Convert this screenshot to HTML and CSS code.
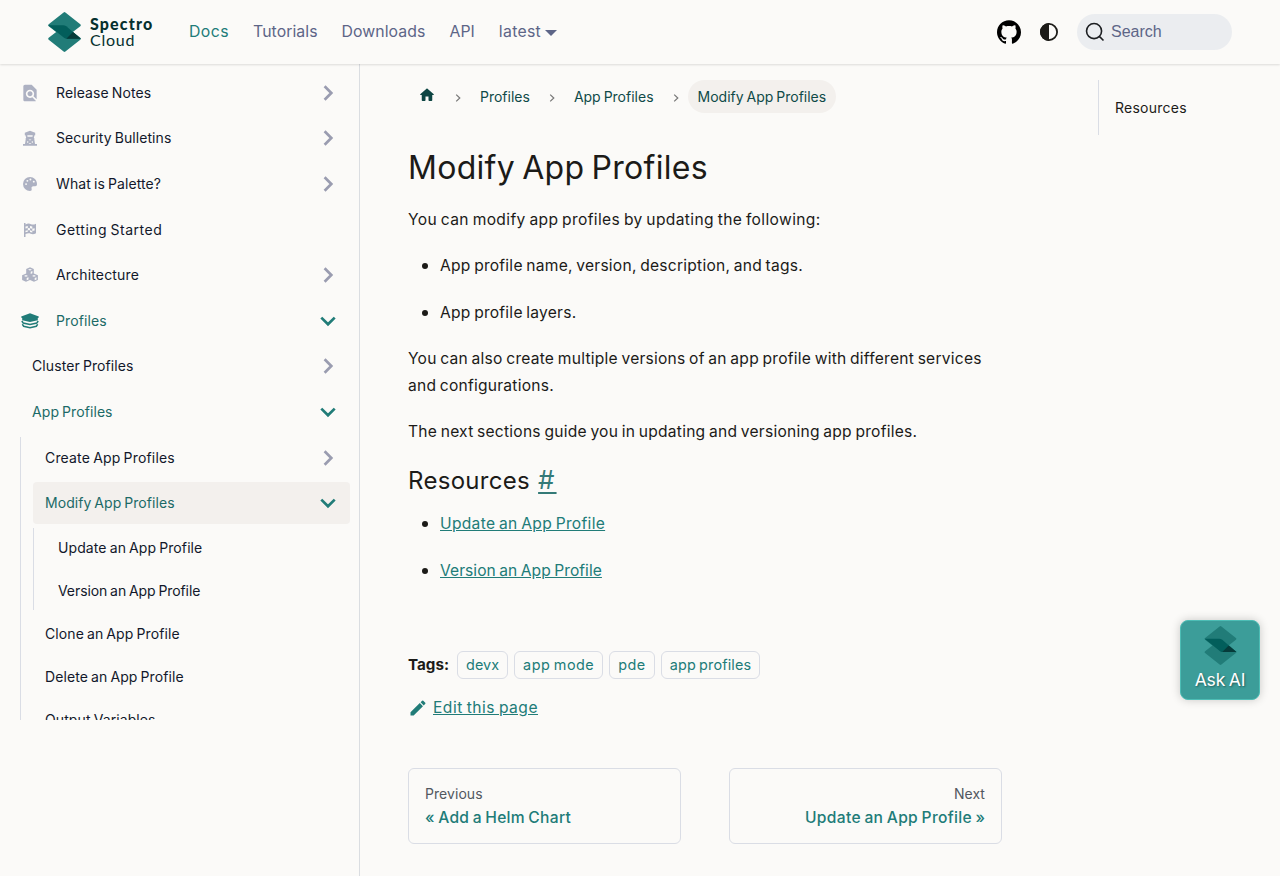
FILE: index.html
```
<!DOCTYPE html>
<html lang="en">
<head>
<meta charset="utf-8">
<title>Modify App Profiles | Palette</title>
<link rel="stylesheet" href="styles.css">
</head>
<body>
<svg class="defs" width="0" height="0">
  <symbol id="mark" viewBox="0 0 33 40">
    <path fill="#217c78" d="M15.6.4Q16.5-.2 17.4.4L32.3 12.2Q33.3 13.2 32.3 14.2L24.8 20 32.3 25.8Q33.3 26.8 32.3 27.8L17.4 39.6Q16.5 40.2 15.6 39.6L.7 27.8Q-.3 26.8.7 25.8L8.2 20 .7 14.2Q-.3 13.2.7 12.2Z"/>
    <path fill="#025e5b" d="M.2 13.2H15q2 0 3.3 1l14.500 12.500H18.600Q17.400 26.700 16 25.800Z"/>
    <path fill="#063b3a" d="M25 20l7.800 6.700H18.300Z"/>
  </symbol>
  <symbol id="chev" viewBox="0 0 24 24"><path d="M8.600 5.300 15.300 12 8.600 18.700" fill="none" stroke="currentColor" stroke-width="2.700"/></symbol>
  <symbol id="crumb" viewBox="0 0 8 8"><path d="M2.200.6 5.800 4 2.200 7.400" fill="none" stroke="#777" stroke-width="1.200"/></symbol>
</svg>

<header class="navbar">
  <a class="brand"><svg class="brand-mark"><use href="#mark"/></svg><span class="brand-name"><b>Spectro</b><span>Cloud</span></span></a>
  <nav class="nav-links">
    <a class="active">Docs</a><a>Tutorials</a><a>Downloads</a><a>API</a><a class="version">latest<i class="caret"></i></a>
  </nav>
  <div class="nav-right">
    <svg class="github" viewBox="0 0 24 24"><path d="M12 .297c-6.63 0-12 5.373-12 12 0 5.303 3.438 9.8 8.205 11.385.6.113.82-.258.82-.577 0-.285-.01-1.04-.015-2.04-3.338.724-4.042-1.61-4.042-1.61C4.422 18.07 3.633 17.7 3.633 17.7c-1.087-.744.084-.729.084-.729 1.205.084 1.838 1.236 1.838 1.236 1.07 1.835 2.809 1.305 3.495.998.108-.776.417-1.305.76-1.605-2.665-.3-5.466-1.332-5.466-5.93 0-1.31.465-2.38 1.235-3.22-.135-.303-.54-1.523.105-3.176 0 0 1.005-.322 3.3 1.23.96-.267 1.98-.399 3-.405 1.02.006 2.04.138 3 .405 2.28-1.552 3.285-1.23 3.285-1.23.645 1.653.24 2.873.12 3.176.765.84 1.23 1.91 1.23 3.22 0 4.61-2.805 5.625-5.475 5.92.42.36.81 1.096.81 2.22 0 1.606-.015 2.896-.015 3.286 0 .315.21.69.825.57C20.565 22.092 24 17.592 24 12.297c0-6.627-5.373-12-12-12"/></svg>
    <svg class="theme" viewBox="0 0 18 18"><circle cx="9" cy="9" r="8.1" fill="none" stroke="#1c1b18" stroke-width="1.8"/><path d="M9 0a9 9 0 0 0 0 18Z" fill="#1c1b18"/></svg>
    <div class="search"><svg viewBox="0 0 20 20"><path d="M14.386 14.386l4.0877 4.0877-4.0877-4.0877c-2.9418 2.9419-7.7115 2.9419-10.6533 0-2.9419-2.9418-2.9419-7.7115 0-10.6533 2.9418-2.9419 7.7115-2.9419 10.6533 0 2.9419 2.9418 2.9419 7.7115 0 10.6533z" fill="none" stroke="#1c1e21" stroke-width="1.6" stroke-linecap="round"/></svg><span>Search</span></div>
  </div>
</header>

<div class="layout">
  <aside class="sidebar">
    <ul class="menu">
      <li class="row top"><svg class="ico" viewBox="0 0 24 24"><path d="M20 19.59V8l-6-6H6c-1.100 0-2 .9-2 2v16c0 1.100.9 2 2 2h12c.45 0 .85-.15 1.190-.4l-4.430-4.430c-.8.520-1.740.830-2.760.830-2.760 0-5-2.240-5-5s2.240-5 5-5 5 2.240 5 5c0 1.020-.31 1.960-.83 2.750L20 19.590zM9 13c0 1.660 1.340 3 3 3s3-1.340 3-3-1.340-3-3-3-3 1.340-3 3z"/></svg><span>Release Notes</span><svg class="chev"><use href="#chev"/></svg></li>
      <li class="row top"><svg class="ico" viewBox="0 0 20 20"><path fill-rule="evenodd" d="M10 2.700 15.200 4.800V7.200H14.500L13.800 10H14.300V11.200L15 16H17V17.800H3V16H5L5.700 11.200V10H6.200L5.500 7.200H4.800V4.800ZM7.300 7.200 7.500 8.700H12.500L12.700 7.200ZM8.500 11.500 10 12.500 11.500 11.500ZM7.300 13 7 15 8.800 14ZM12.700 13 11.200 14 13 15ZM10 14.900 8.500 16H11.500Z"/></svg><span class="tight">Security Bulletins</span><svg class="chev"><use href="#chev"/></svg></li>
      <li class="row top"><svg class="ico" viewBox="0 0 20 20"><path fill-rule="evenodd" transform="translate(3 3) scale(.875)" d="M8 0a8 8 0 0 0 0 16c1.500 0 2.200-1 1.900-2.300-.6-2 .2-3.200 2-3.200H14c1.300 0 2-.8 2-2.500C16 3.600 12.400 0 8 0ZM3.500 7a1.100 1.100 0 1 1 0 2.200 1.100 1.100 0 0 1 0-2.200ZM5 3.300a1.100 1.100 0 1 1 0 2.200 1.100 1.100 0 0 1 0-2.200ZM8.500 1.700a1.100 1.100 0 1 1 0 2.200 1.100 1.100 0 0 1 0-2.200ZM12.300 4.200a1.100 1.100 0 1 1 0 2.200 1.100 1.100 0 0 1 0-2.200Z"/></svg><span>What is Palette?</span><svg class="chev"><use href="#chev"/></svg></li>
      <li class="row top"><svg class="ico" viewBox="0 0 20 20"><path fill-rule="evenodd" d="M4 3H5.500V4.400C8 3.200 9.500 3.500 11 4.200 12.500 4.900 14 4.600 16 3.700V13.300C14 14.300 12.300 14.400 10.600 13.700 9 13 7.500 13.200 5.500 14V17H4ZM5.500 6.500V8.600L7.800 8V5.900ZM10 6V8.200L12.300 8.700V6.600ZM7.800 8V10.200L10 10.300V8.200ZM12.300 8.700V10.900L14.600 10.400V8.200ZM5.500 10.800V12.200L7.800 11.700V10.200ZM10 10.300V12L12.300 12.500V10.900Z"/></svg><span class="loose">Getting Started</span></li>
      <li class="row top"><svg class="ico" viewBox="0 0 20 20"><path fill-rule="evenodd" d="M10 2.300 13.800 3.900V8.400L17.900 10.200V15L14 16.800 10 15 6 16.800 2.100 15V10.200L6.200 8.400V3.900ZM8 4.700 10 5.500 12 4.700 10 3.900ZM10.700 6.800V9L12.400 8.200V6ZM4 10.900 6 11.700 8 10.900 6 10.100ZM12 10.900 14 11.700 16 10.900 14 10.100ZM6.700 13V15.200L8.500 14.400V12.200ZM14.700 13V15.200L16.500 14.400V12.200Z"/></svg><span class="mid">Architecture</span><svg class="chev"><use href="#chev"/></svg></li>
      <li class="row top open"><svg class="ico" viewBox="0 0 20 20"><path d="M10 2.300 18.800 5.600V6.400L17.800 6.900V9.300L10 11 2.200 9.300V6.900L1.200 6.400V5.600Z"/><path d="M1.800 10 3.200 12 10 13.500 16.800 12 18.200 10M2.300 13.300 3.700 15.300 10 16.700 16.300 15.300 17.700 13.300" fill="none" stroke="currentColor" stroke-width="1.500"/></svg><span>Profiles</span><svg class="chev"><use href="#chev"/></svg></li>
      <li class="row"><span>Cluster Profiles</span><svg class="chev"><use href="#chev"/></svg></li>
      <li class="row open"><span class="tight">App Profiles</span><svg class="chev"><use href="#chev"/></svg></li>
      <li><ul class="nested">
        <li class="row"><span class="mid">Create App Profiles</span><svg class="chev"><use href="#chev"/></svg></li>
        <li class="row open current"><span>Modify App Profiles</span><svg class="chev"><use href="#chev"/></svg></li>
        <li><ul class="nested">
          <li class="row leaf"><span>Update an App Profile</span></li>
          <li class="row leaf"><span class="tighter">Version an App Profile</span></li>
        </ul></li>
        <li class="row leaf"><span>Clone an App Profile</span></li>
        <li class="row leaf"><span>Delete an App Profile</span></li>
        <li class="row leaf"><span>Output Variables</span></li>
      </ul></li>
    </ul>
  </aside>

  <main class="content">
    <nav class="crumbs">
      <svg class="home" viewBox="0 0 24 24"><path d="M10 19v-5h4v5c0 .55.45 1 1 1h3c.55 0 1-.45 1-1v-7h1.700c.46 0 .68-.57.33-.87L12.670 3.600c-.38-.34-.96-.34-1.340 0l-8.360 7.530c-.34.300-.13.870.330.870H5v7c0 .55.450 1 1 1h3c.55 0 1-.45 1-1z"/></svg>
      <svg class="sep"><use href="#crumb"/></svg><a>Profiles</a>
      <svg class="sep"><use href="#crumb"/></svg><a>App Profiles</a>
      <svg class="sep last"><use href="#crumb"/></svg><a class="pill">Modify App Profiles</a>
    </nav>
    <h1>Modify App Profiles</h1>
    <p class="intro">You can modify app profiles by updating the following:</p>
    <ul>
      <li>App profile name, version, description, and tags.</li>
      <li>App profile layers.</li>
    </ul>
    <p>You can also create multiple versions of an app profile with different services<br>and configurations.</p>
    <p>The next sections guide you in updating and versioning app profiles.</p>
    <h2>Resources <a>#</a></h2>
    <ul class="links">
      <li><a>Update an App Profile</a></li>
      <li><a class="tight-link">Version an App Profile</a></li>
    </ul>
    <div class="tags"><b>Tags:</b><a>devx</a><a class="wide-tag">app mode</a><a class="wide-tag">pde</a><a class="long-tag">app profiles</a></div>
    <div class="edit"><svg viewBox="0 0 40 40"><path d="m34.500 11.700-3 3.100-6.300-6.300 3.100-3q.5-.5 1.200-.5t1.100.5l3.900 3.900q.5.400.5 1.100t-.5 1.200zM5 28.700 23.600 10.100l6.300 6.300L11.300 35H5v-6.300z"/></svg><a>Edit this page</a></div>
    <nav class="pager">
      <a><small>Previous</small><span>« Add a Helm Chart</span></a>
      <a class="next"><small>Next</small><span>Update an App Profile »</span></a>
    </nav>
  </main>

  <aside class="toc"><a>Resources</a></aside>
</div>

<button class="ask"><svg><use href="#mark"/></svg><span>Ask AI</span></button>
</body>
</html>
```
FILE: styles.css
```
* { box-sizing: border-box; }
body {
  margin: 0;
  height: 876px;
  overflow: hidden;
  background: #fbfaf8;
  color: #1c1b18;
  font: 15.6px/26.4px Inter, "Open Sans", sans-serif;
  word-spacing: -1px;
  letter-spacing: .23px;
}
ul { margin: 0; padding: 0; }
.defs { position: absolute; }

.navbar {
  position: relative;
  z-index: 2;
  display: flex;
  align-items: center;
  height: 64px;
  padding: 0 48px;
  background: #fbfaf8;
  box-shadow: 0 1px 2px rgba(0, 0, 0, .12);
}
.brand { display: flex; align-items: center; gap: 9px; width: 141px; }
.brand-mark { width: 33px; height: 40px; }
.brand-name { display: flex; flex-direction: column; margin-top: -1px; color: #06302e; font: 16px/16px Lato, sans-serif; letter-spacing: .75px; }
.brand-name b { font-weight: 900; font-size: 16px; letter-spacing: 1.150px; }
.nav-links { display: flex; gap: 24px; padding-bottom: 1px; color: #5d6587; font-size: 15.800px; line-height: 23px; letter-spacing: .07px; }
.nav-links .active { color: #217c78; letter-spacing: .45px; }
.version { display: flex; align-items: center; letter-spacing: .3px; }
.caret { border: 6px solid transparent; border-top-color: currentColor; border-bottom: 0; margin: 3px 0 0 4px; }
.nav-right { display: flex; align-items: center; margin-left: auto; }
.github { width: 24px; height: 24px; margin-right: 19px; }
.theme { width: 18px; height: 18px; margin-right: 19px; }
.search { display: flex; align-items: center; gap: 6px; width: 155px; height: 36px; padding-left: 8px; border-radius: 18px; background: #ebedf0; color: #5d6587; font: 16px "Liberation Sans", Arial, sans-serif; letter-spacing: 0; }
.search svg { width: 20px; height: 20px; }

.layout { display: flex; height: 812px; }
.sidebar { width: 360px; flex: none; border-right: 1px solid #dadde1; }
.menu { height: 656px; padding: 8px 9px 0 20px; overflow: hidden; list-style: none; font-size: 14px; font-weight: 400; line-height: 18px; color: #12182b; letter-spacing: .1px; }
.menu ul { list-style: none; }
.menu .tight { letter-spacing: .08px; }
.menu .tighter { letter-spacing: -.08px; }
.menu .mid { letter-spacing: .17px; }
.menu .loose { letter-spacing: .5px; }
.row { display: flex; align-items: center; height: 41.600px; margin-bottom: 4px; padding: 0 10px 0 12px; border-radius: 4px; }
.row.top { padding-left: 0; }
.row.leaf { height: 39px; padding-top: 1px; }
.ico { width: 20px; height: 20px; margin-right: 16px; fill: currentColor; color: #adb1c2; }
.chev { width: 24px; height: 24px; margin-left: auto; color: #9a9cb0; }
.open { color: #1b6a67; }
.open .ico { color: #217c78; }
.open .chev { transform: rotate(90deg); color: #217c78; }
.current { background: #f3f0ed; letter-spacing: .05px; }
.nested { border-left: 1px solid #dadde5; padding-left: 12px; }
.nested .nested { margin-bottom: 4px; }
.nested .nested .row:last-child { margin-bottom: 0; }

.content { width: 594px; margin-left: 48px; padding-top: 16px; flex: none; }
.crumbs { display: flex; align-items: center; height: 33px; color: #0f4a48; font-size: 14px; letter-spacing: 0; }
.crumbs a { padding-top: 1px; }
.home { width: 18px; height: 18px; margin: 0 0 4px 10px; fill: #0d4543; }
.sep { width: 8px; height: 8px; margin: 2px 18px 0; }
.sep.last { margin-right: 8px; }
.crumbs .pill { height: 33px; padding: 0 10px; border-radius: 17px; background: #f3f0ed; line-height: 34px; }
h1 { margin: 35px 0 19px; font-size: 32px; font-weight: 400; line-height: 40px; word-spacing: -2px; letter-spacing: .28px; }
p { margin: 0 0 20px; }
.intro { letter-spacing: .36px; }
.content ul { padding-left: 32px; }
.content li { height: 26.400px; margin-bottom: 20px; }
.content li::marker { font-size: 18px; line-height: 20px; }
h2 { height: 31px; margin: 0 0 15px; padding-top: 1px; font-size: 24px; font-weight: 400; line-height: 30px; letter-spacing: .3px; }
h2 a { color: #347a77; text-decoration: underline; text-underline-offset: 3px; margin-left: 2px; font-size: 26px; line-height: 24px; letter-spacing: 2px; }
.links a, .edit a { color: #217c78; text-decoration: underline; letter-spacing: .3px; }
.links .tight-link { letter-spacing: .05px; }
.edit a { letter-spacing: .5px; }
.tags { display: flex; align-items: center; gap: 6px; margin-top: 67px; height: 28px; letter-spacing: 0; }
.tags b { margin-right: 2px; font-size: 15.200px; }
.tags a { height: 28px; padding: 0 8px; border: 1px solid #dadde5; border-radius: 6px; color: #217c78; font-size: 14.400px; line-height: 26px; letter-spacing: .04px; }
.tags .wide-tag { letter-spacing: .5px; }
.tags .long-tag { letter-spacing: .15px; }
.edit { display: flex; align-items: center; gap: 5px; margin-top: 15.500px; }
.edit svg { width: 20px; height: 20px; fill: #217c78; }
.pager { display: grid; grid-template-columns: 1fr 1fr; gap: 48px; margin-top: 46.500px; }
.pager a { display: flex; flex-direction: column; height: 76px; padding: 15px 16px; border: 1px solid #dadde5; border-radius: 6px; font-weight: 500; line-height: 24px; color: #217c78; letter-spacing: .28px; }
.pager small { font-size: 14px; font-weight: 400; line-height: 20px; color: #525860; margin-bottom: 2px; letter-spacing: .05px; }
.pager .next { text-align: right; }
.pager .next span { letter-spacing: .33px; margin-right: -.33px; }

.toc { margin: 16px 0 0 96px; width: 134px; height: 55px; border-left: 1px solid #dadde5; padding: 16px; font-size: 14px; line-height: 24px; letter-spacing: .25px; }
.ask { position: absolute; z-index: 3; left: 1180px; top: 620px; width: 80px; height: 80px; padding: 5px 0 0; border: 1px solid #4dbdb5; border-radius: 8px; background: #3c9d99; box-shadow: 0 0 10px rgba(0, 0, 0, .2); display: flex; flex-direction: column; align-items: center; color: #fff; font: 17.600px/29px Inter, sans-serif; letter-spacing: -.2px; word-spacing: -1px; text-shadow: 1px 1px 2px rgba(0, 0, 0, .4); }
.ask svg { width: 33px; height: 39px; }
```
